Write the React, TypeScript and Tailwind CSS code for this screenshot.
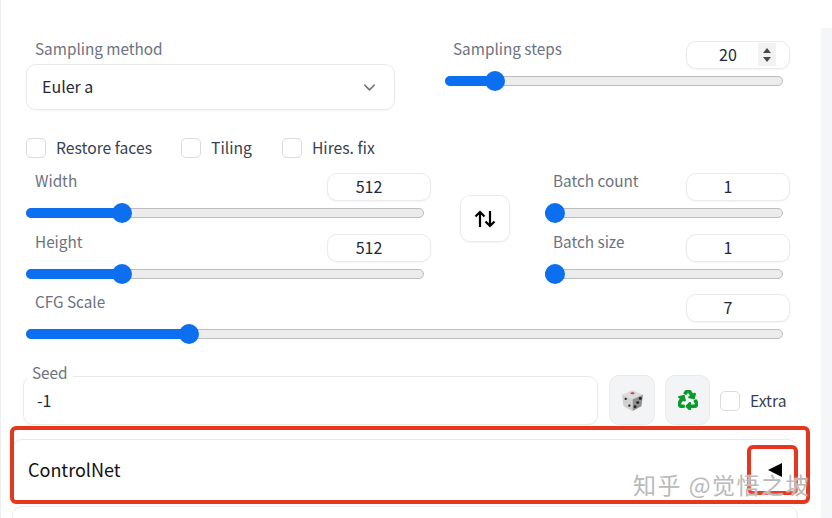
import { ChevronDown } from "lucide-react";
import { FaRecycle } from "react-icons/fa";

const font = "[font-family:'Noto_Sans_CJK_SC','Noto_Sans',sans-serif]";

function NumberBox({ value, spin }: { value: string; spin?: boolean }) {
  return (
    <div className="relative flex h-[28px] w-[104px] shrink-0 items-center justify-center rounded-[10px] border border-[#e8eaed] bg-white pb-[2px] pr-5 text-[16px] text-[#1f2937] shadow-[0_1px_2px_#f3f4f6]">
      {value}
      {spin && (
        <div className="absolute right-[13px] top-[1px] flex h-[23px] w-[18px] flex-col items-center justify-center gap-[4px] bg-[#f2f2f2]">
          <div className="h-0 w-0 border-x-[4px] border-b-[5px] border-x-transparent border-b-[#4b4b4b]" />
          <div className="h-0 w-0 border-x-[4px] border-t-[5px] border-x-transparent border-t-[#4b4b4b]" />
        </div>
      )}
    </div>
  );
}

function Track({ width, at }: { width: number; at: number }) {
  return (
    <div className="relative h-[20px]" style={{ width }}>
      <div className="absolute inset-x-0 top-[5px] h-[10px] rounded-full border border-[#bdbdbd] bg-[#ececec]" />
      <div
        className="absolute left-0 top-[5px] h-[10px] rounded-l-full bg-[#0b6ff0]"
        style={{ width: at }}
      />
      <div
        className="absolute top-0 h-[20px] w-[20px] rounded-full bg-[#0b6ff0]"
        style={{ left: at - 10 }}
      />
    </div>
  );
}

function SliderBlock(props: {
  label: string;
  value: string;
  track: number;
  at: number;
  spin?: boolean;
  tight?: boolean;
  className?: string;
}) {
  return (
    <div className={props.className}>
      <div className="flex items-start justify-between">
        <div
          className={`-mt-[1px] text-[15.3px] leading-[16px] text-[#6b7280] ${props.tight ? "pl-[8px]" : "pl-[9px]"}`}
        >
          {props.label}
        </div>
        <NumberBox value={props.value} spin={props.spin} />
      </div>
      <div className="mt-[2px]">
        <Track width={props.track} at={props.at} />
      </div>
    </div>
  );
}

function Check({ label, className }: { label: string; className?: string }) {
  return (
    <div className={`flex items-center ${className ?? ""}`}>
      <div className="h-[20px] w-[20px] rounded-[5px] border border-[#d9dbe0] bg-white" />
      <span className="-mt-[1px] ml-[10px] text-[15.7px] leading-[20px] text-[#374151]">{label}</span>
    </div>
  );
}

function Dice() {
  return (
    <svg width="25" height="25" viewBox="0 0 24 24">
      <path d="M12 2 L22 6.5 L20.5 17.5 L12 22 L3.5 17.5 L2 6.5 Z" fill="#dcdcdc" />
      <path d="M12 11 L22 6.5 L20.5 17.5 L12 22 Z" fill="#8f8f8f" />
      <path d="M12 11 L2 6.5 L3.5 17.5 L12 22 Z" fill="#d0d0d0" />
      <ellipse cx="12" cy="5" rx="2" ry="1" fill="#c43c3c" />
      <circle cx="5.5" cy="10.5" r="1.1" fill="#222" />
      <circle cx="9" cy="17" r="1.1" fill="#222" />
      <circle cx="14.5" cy="18" r="1.4" fill="#222" />
      <circle cx="17" cy="14" r="1.4" fill="#222" />
      <circle cx="19.5" cy="10" r="1.4" fill="#222" />
    </svg>
  );
}

function SwapIcon() {
  return (
    <svg width="22" height="18" viewBox="0 0 22 18" fill="none" stroke="#000" strokeWidth="2.2">
      <path d="M6 17 V2 M1.5 6.5 L6 2 L10.5 6.5" />
      <path d="M16 1 V16 M11.5 11.5 L16 16 L20.5 11.5" />
    </svg>
  );
}

export default function App() {
  return (
    <div className={`relative flex h-[518px] w-[832px] overflow-hidden bg-white ${font}`}>
      <div className="w-[1px] shrink-0 bg-[#eeeeee]" />
      <div className="w-[820px] shrink-0 pl-[25px] pt-[41px]">
        <div className="flex">
          <div className="w-[369px]">
            <div className="-mt-[1px] pl-[9px] text-[15.3px] leading-[16px] text-[#6b7280]">Sampling method</div>
            <div className="mt-[8px] flex h-[46px] items-center justify-between rounded-[10px] border border-[#e8eaed] pb-[2px] pl-[15px] pr-[15px] text-[16px] text-[#1f2937] shadow-[0_1px_2px_#f3f4f6]">
              Euler a
              <ChevronDown size={19} strokeWidth={1.8} className="mt-[2px] text-[#6b7280]" />
            </div>
          </div>
          <SliderBlock
            className="ml-[50px] w-[345px]"
            label="Sampling steps"
            value="20"
            spin
            tight
            track={338}
            at={50}
          />
        </div>

        <div className="mt-[28px] flex h-[20px]">
          <Check label="Restore faces" />
          <Check label="Tiling" className="ml-[29px]" />
          <Check label="Hires. fix" className="ml-[30px]" />
        </div>

        <div className="mt-[15px] flex">
          <div className="w-[405px]">
            <SliderBlock label="Width" value="512" track={398} at={96} />
            <SliderBlock className="mt-[11px]" label="Height" value="512" track={398} at={96} />
          </div>
          <div className="ml-[29px] mt-[22px] flex h-[47px] w-[50px] items-center justify-center rounded-[10px] border border-[#e8eaed] shadow-[0_1px_2px_#f3f4f6]">
            <SwapIcon />
          </div>
          <div className="ml-[35px] w-[245px]">
            <SliderBlock label="Batch count" value="1" track={238} at={10} tight />
            <SliderBlock className="mt-[11px]" label="Batch size" value="1" track={238} at={10} tight />
          </div>
        </div>

        <SliderBlock className="mt-[10px] w-[764px]" label="CFG Scale" value="7" track={757} at={163} />

        <div className="mt-[31px] flex items-start">
          <div className="relative -ml-[3px] mt-[1px] flex h-[49px] w-[575px] items-center rounded-[10px] border border-[#e8eaed] pl-[13px] text-[16px] text-[#1f2937] shadow-[0_1px_2px_#f3f4f6]">
            <span className="absolute -top-[15px] left-[3px] bg-white px-[5px] text-[15.3px] leading-[20px] text-[#6b7280]">
              Seed
            </span>
            <span className="-mt-[1px]">-1</span>
          </div>
          <div className="ml-[11px] flex h-[50px] w-[46px] items-center justify-center rounded-[10px] border border-[#e8eaed] bg-[#f3f4f6]">
            <Dice />
          </div>
          <div className="ml-[10px] flex h-[50px] w-[45px] items-center justify-center rounded-[10px] border border-[#e8eaed] bg-[#f3f4f6]">
            <FaRecycle size={20} color="#0a9a2a" stroke="#0a9a2a" strokeWidth={30} />
          </div>
          <div className="ml-[10px] mt-[16px]">
            <Check label="Extra" />
          </div>
        </div>

        <div className="-ml-[14px] mt-[14px] flex h-[62px] w-[786px] items-center rounded-t-[10px] border-x border-t border-[#e8eaed] pb-[2px] pl-[15px] text-[18px] text-[#111111]">
          ControlNet
        </div>
        <div className="-ml-[14px] mt-[5px] h-[40px] w-[786px] rounded-t-[10px] border border-[#e8eaed]" />
      </div>
      <div className="mt-[28px] flex-1 bg-[#f5f6f8]" />

      {/* annotations drawn over the screenshot */}
      <div className="absolute left-[10px] top-[426px] h-[78px] w-[800px] rounded-[6px] border-[4px] border-[#e6361d]" />
      <div className="absolute left-[747px] top-[445px] h-[50px] w-[51px] rounded-[6px] border-[4px] border-[#e6361d]" />
      <div className="absolute left-[768px] top-[463px] h-0 w-0 border-y-[7px] border-r-[14px] border-y-transparent border-r-black" />
      <div className="absolute left-[633px] top-[468px] whitespace-nowrap text-[23px] leading-[32px] tracking-[1.5px] text-[#b9b9b9] [text-shadow:0_0_2px_#ffffff]">
        知乎 @觉悟之坡
      </div>
    </div>
  );
}
